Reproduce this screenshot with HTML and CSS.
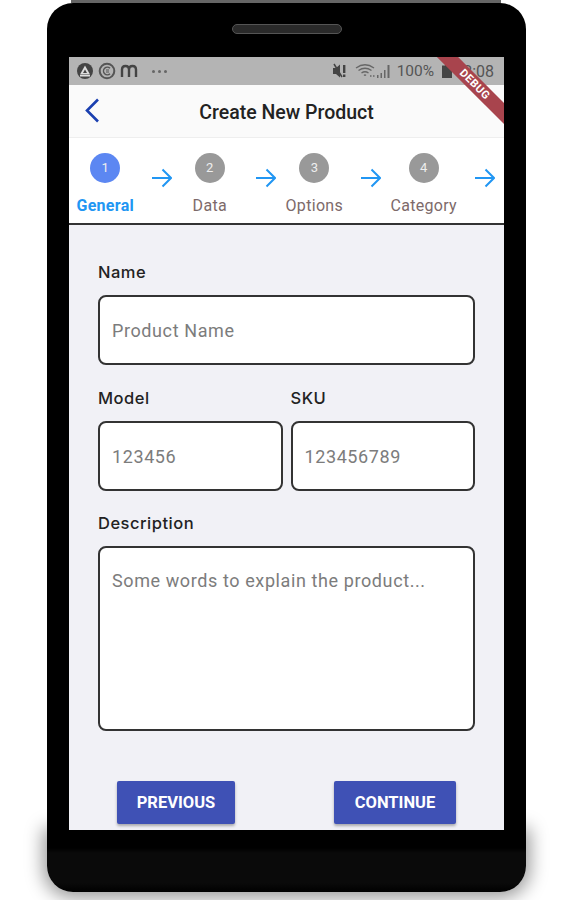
FILE: index.html
```html
<!DOCTYPE html>
<html lang="en">
<head>
  <meta charset="UTF-8" />
  <meta name="viewport" content="width=device-width, initial-scale=1.0"/>
  <title>Create New Product</title>
  <link rel="stylesheet" href="styles.css">
</head>
<body>

<div class="top-strip"></div>
<main class="phone">
  <div class="speaker"></div>

  <div class="screen">
    <div class="debug-ribbon"><span>DEBUG</span></div>

    <div class="status-bar">
      <div class="status-left">
        <svg width="18" height="18" viewBox="0 0 18 18"><circle cx="9" cy="9" r="8" fill="#444"/><path d="M9 3.5L14 12.5H4Z" fill="#ddd"/><path d="M9 7.5L11 11H7Z" fill="#444"/><rect x="4" y="13" width="10" height="1.5" fill="#ddd"/></svg>
        <svg width="18" height="18" viewBox="0 0 18 18" fill="none" stroke="#555"><circle cx="9" cy="9" r="7.300" stroke-width="2"/><path d="M12 6.3A3.8 3.8 0 1 0 12 11.7" stroke-width="1.5"/><path d="M11 8H8M11 10H8" stroke-width="1"/></svg>
        <svg width="18" height="18" viewBox="0 0 18 18" fill="none" stroke="#444" stroke-width="2.4"><path d="M2 15V7.5Q2 4 5.5 4T9 7.5V15M9 7.5Q9 4 12.5 4T16 7.5V15"/></svg>
        <span class="status-dots">
          <i></i><i></i><i></i>
        </span>
      </div>
      <div class="status-right">
        <svg class="mute" width="15" height="18" viewBox="0 0 15 18" fill="#444"><path d="M1 6H4L8 2.500V15.500L4 12H1Z"/><path d="M2 2L10 15" stroke="#444" stroke-width="1.500"/><rect x="11" y="3" width="2.400" height="8"/><rect x="11" y="12.500" width="2.400" height="2.500"/></svg>
        <svg class="wifi" width="21" height="18" viewBox="0 0 21 18" fill="none" stroke="#666" stroke-width="1.300"><path d="M1 6Q10 -0.500 19 6M3.500 8.500Q10 4 16.500 8.500M6.500 11Q10 8.500 13.500 11M9 13.500Q10 12.500 11 13.500"/><path d="M15 14H21" stroke-dasharray="1.500 1.500"/></svg>
        <svg class="signal" width="13" height="18" viewBox="0 0 13 18" fill="#666"><rect x="0" y="13" width="1.500" height="3"/><rect x="3.500" y="11" width="1.500" height="5"/><rect x="7" y="8" width="1.500" height="8"/><rect x="10.500" y="3" width="2" height="13"/></svg>
        <span class="status-text">100%</span>
        <svg class="battery" width="10" height="18" viewBox="0 0 10 18" fill="#444"><path d="M3 2H7V3.500H10V16H0V3.500H3Z"/></svg>
        <span class="status-text status-time">12:08</span>
      </div>
    </div>

    <header class="app-bar">
      <svg class="back-icon" width="18" height="26" viewBox="0 0 18 26" fill="none" stroke="#1a3fb0" stroke-width="2.600"><path d="M14 1.500L3 12.500L14 23.500"/></svg>
      <h1>Create New Product</h1>
    </header>

    <nav class="stepper">
      <div class="step active">
        <div class="step-num">1</div>
        <div class="step-label">General</div>
      </div>
      <svg class="step-arrow" width="20" height="20" viewBox="0 0 20 20" fill="none" stroke="#2196f3" stroke-width="2"><path d="M0 10H18M10.500 1.500L19 10L10.500 18.500"/></svg>
      <div class="step">
        <div class="step-num">2</div>
        <div class="step-label">Data</div>
      </div>
      <svg class="step-arrow" width="20" height="20" viewBox="0 0 20 20" fill="none" stroke="#2196f3" stroke-width="2"><path d="M0 10H18M10.500 1.500L19 10L10.500 18.500"/></svg>
      <div class="step">
        <div class="step-num">3</div>
        <div class="step-label">Options</div>
      </div>
      <svg class="step-arrow" width="20" height="20" viewBox="0 0 20 20" fill="none" stroke="#2196f3" stroke-width="2"><path d="M0 10H18M10.500 1.500L19 10L10.500 18.500"/></svg>
      <div class="step step-wide">
        <div class="step-num">4</div>
        <div class="step-label">Category</div>
      </div>
      <svg class="step-arrow" width="20" height="20" viewBox="0 0 20 20" fill="none" stroke="#2196f3" stroke-width="2"><path d="M0 10H18M10.500 1.500L19 10L10.500 18.500"/></svg>
    </nav>

    <form class="product-form">
      <div class="form-group">
        <label for="name">Name</label>
        <input type="text" id="name" placeholder="Product Name">
      </div>

      <div class="form-flex">
        <div class="form-group">
          <label for="model">Model</label>
          <input type="text" id="model" placeholder="123456">
        </div>
        <div class="form-group">
          <label for="sku">SKU</label>
          <input type="text" id="sku" placeholder="123456789">
        </div>
      </div>

      <div class="form-group">
        <label for="description">Description</label>
        <textarea id="description" placeholder="Some words to explain the product..."></textarea>
      </div>

      <div class="form-buttons">
        <button type="button" class="btn btn-prev">PREVIOUS</button>
        <button type="button" class="btn btn-next">CONTINUE</button>
      </div>
    </form>
  </div>

  <div class="chin"></div>
</main>

</body>
</html>
```

FILE: styles.css
```css
html, body {
  height: 900px;
  overflow: hidden;
}

body {
  margin: 0;
  font-family: 'Roboto', sans-serif;
  background: #fff;
}

.top-strip {
  width: 430px;
  height: 3px;
  margin-left: 71px;
  background: #666;
}

.phone {
  position: relative;
  width: 479px;
  height: 889px;
  margin-left: 47px;
  background: linear-gradient(#000 845px, #0a0a0a 850px, #0a0a0a 880px, #000 889px);
  border-radius: 26px;
  box-sizing: border-box;
  padding: 21px 22px 0;
}

.speaker {
  width: 108px;
  height: 8px;
  margin: 0 auto 23px;
  background: #2a2a2a;
  border: 1px solid #555;
  border-radius: 6px;
}

/* soft floor shadow round the lower part of the body */
.chin {
  position: absolute;
  left: 0;
  right: 0;
  bottom: 0;
  height: 62px;
  z-index: -1;
  border-radius: 0 0 26px 26px;
  box-shadow: 0 2px 18px 4px rgba(0, 0, 0, 0.4);
}

.screen {
  position: relative;
  height: 773px;
  overflow: hidden;
  background: #f1f1f6;
}

.debug-ribbon {
  position: absolute;
  top: 12px;
  right: -38px;
  width: 150px;
  height: 15px;
  padding-left: 22px;
  box-sizing: border-box;
  transform: rotate(45deg);
  background: #a8444d;
  color: #fff;
  font-size: 11px;
  font-weight: 700;
  line-height: 15px;
  text-align: center;
  letter-spacing: 0.5px;
  z-index: 5;
}

.status-bar {
  display: flex;
  justify-content: space-between;
  align-items: center;
  height: 28px;
  padding: 0 10px 0 7px;
  background: #b4b4b4;
}

.status-left {
  display: flex;
  align-items: center;
  gap: 4px;
}

.status-dots {
  display: flex;
  gap: 3px;
  margin-left: 10px;
}

.status-dots i {
  width: 3px;
  height: 3px;
  border-radius: 50%;
  background: #666;
}

.status-right {
  display: flex;
  align-items: center;
}

.status-text {
  font-size: 15.5px;
  color: #555;
}

.status-time {
  font-size: 16px;
  margin-left: 2px;
}

.mute {
  margin-right: 8px;
}

.wifi {
  margin-right: 1px;
}

.signal {
  margin-right: 7px;
}

.battery {
  margin-left: 8px;
}

.app-bar {
  display: flex;
  align-items: center;
  position: relative;
  height: 53px;
  padding-top: 2px;
  background: #fafafa;
  border-bottom: 1px solid #eee;
  box-sizing: border-box;
}

.back-icon {
  position: absolute;
  left: 15px;
  top: 13px;
}

.app-bar h1 {
  flex: 1;
  margin: 0;
  text-align: center;
  font-size: 19.5px;
  font-weight: 500;
  color: #222;
}

.stepper {
  display: flex;
  align-items: flex-start;
  height: 87px;
  padding: 15px 0 0 7px;
  background: #fff;
  border-bottom: 2px solid #333;
  box-sizing: border-box;
}

.step {
  width: 59px;
  text-align: center;
}

.step-wide {
  width: 69px;
}

.step-num {
  width: 30px;
  height: 30px;
  margin: 0 auto 13px;
  border-radius: 50%;
  background: #999;
  color: #eee;
  font-size: 13px;
  line-height: 30px;
}

.step-label {
  font-size: 16px;
  color: #7d6a6a;
  white-space: nowrap;
  letter-spacing: 0.3px;
}

.step.active .step-num {
  background: #5c87f2;
}

.step.active .step-label {
  color: #2196f3;
  font-weight: 700;
}

.step-arrow {
  flex: none;
  margin: 15px 9px 0 17px;
}

.product-form {
  padding: 37px 29px 0;
}

.form-group {
  flex: 1;
  margin-bottom: 23px;
}

.form-flex {
  display: flex;
  gap: 8px;
}

.form-flex .form-group {
  margin-bottom: 22px;
}

label {
  display: block;
  margin-bottom: 13px;
  font-family: 'Inter', sans-serif;
  font-size: 16.5px;
  font-weight: 500;
  line-height: 20px;
  letter-spacing: 0.5px;
  color: #222;
}

input, textarea {
  display: block;
  width: 100%;
  height: 70px;
  padding: 12px;
  border: 2px solid #333;
  border-radius: 8px;
  background: #fff;
  font-family: 'Roboto', sans-serif;
  font-size: 18px;
  letter-spacing: 0.6px;
  color: #222;
  box-sizing: border-box;
  resize: none;
  outline: none;
}

textarea {
  height: 185px;
  padding-top: 22px;
}

input::placeholder, textarea::placeholder {
  color: #7c7c7c;
  opacity: 1;
}

.form-buttons {
  display: flex;
  justify-content: space-between;
  margin-top: 50px;
  padding: 0 19px;
}

.btn {
  height: 43px;
  border: none;
  border-radius: 2px;
  background: #3f51b5;
  color: #fff;
  font-family: 'Roboto', sans-serif;
  font-size: 16.5px;
  font-weight: 700;
  box-shadow: 0 2px 3px rgba(0, 0, 0, 0.3);
  cursor: pointer;
}

.btn-prev {
  width: 118px;
}

.btn-next {
  width: 122px;
}
```
